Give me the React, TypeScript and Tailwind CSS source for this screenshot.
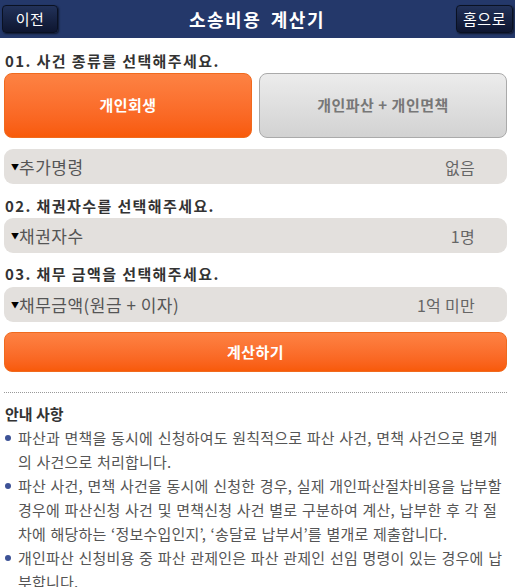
import React from 'react';

const FONT = "font-['Noto_Sans_CJK_KR','Noto_Sans',sans-serif]";

interface SelectRowProps {
  label: string;
  value: string;
}

const SelectRow: React.FC<SelectRowProps> = ({ label, value }) => (
  <div className="flex h-[35px] items-center justify-between rounded-[9px] bg-[#e3e0dd] pl-[7px] pr-[32px] text-[#555]">
    <span className="flex items-center text-[17px] tracking-[0.5px]">
      <span className="text-[8px] leading-none tracking-normal text-black">▼</span>
      {label}
    </span>
    <span className="text-[16px] tracking-[0.3px] text-[#666]">{value}</span>
  </div>
);

const notices = [
  '파산과 면책을 동시에 신청하여도 원칙적으로 파산 사건, 면책 사건으로 별개의 사건으로 처리합니다.',
  '파산 사건, 면책 사건을 동시에 신청한 경우, 실제 개인파산절차비용을 납부할 경우에 파산신청 사건 및 면책신청 사건 별로 구분하여 계산, 납부한 후 각 절차에 해당하는 ‘정보수입인지’, ‘송달료 납부서’를 별개로 제출합니다.',
  '개인파산 신청비용 중 파산 관제인은 파산 관제인 선임 명령이 있는 경우에 납부합니다.',
];

const App: React.FC = () => {
  return (
    <div className={`h-[587px] w-[515px] overflow-hidden bg-white ${FONT}`}>
      {/* Header */}
      <header className="flex h-[38px] items-center justify-between bg-[#24386a] px-[2px]">
        <button className="h-[28px] w-[56px] rounded-[4px] border border-[#0a1122] bg-gradient-to-b from-[#22325a] to-[#0e1630] text-[15px] tracking-[0.5px] text-white shadow-[1px_1px_2px_rgba(0,0,0,0.6)]">
          이전
        </button>
        <h1 className="text-[18px] font-bold tracking-[1.5px] text-white [word-spacing:4px]">소송비용 계산기</h1>
        <button className="h-[28px] w-[57px] rounded-[4px] border border-[#0a1122] bg-gradient-to-b from-[#22325a] to-[#0e1630] text-[15px] tracking-[0.5px] text-white shadow-[1px_1px_2px_rgba(0,0,0,0.6)]">
          홈으로
        </button>
      </header>

      <main className="pl-[4px] pr-[8px]">
        <p className="mt-[13px] h-[20px] pl-[1px] text-[15px] font-bold leading-[20px] tracking-[1.4px] text-[#333]">01. 사건 종류를 선택해주세요.</p>
        <div className="mt-[2px] flex gap-[7px]">
          <button className="h-[65px] flex-1 rounded-[8px] border border-[#f06a1e] bg-gradient-to-b from-[#fd8243] to-[#f85a08] text-[15px] font-bold tracking-[0.5px] text-white">
            개인회생
          </button>
          <button className="h-[65px] flex-1 rounded-[8px] border border-[#aaa] bg-gradient-to-b from-[#ececec] to-[#d2d2d2] text-[15px] font-bold tracking-[0.5px] text-[#777]">
            개인파산 + 개인면책
          </button>
        </div>

        <div className="mt-[11px]">
          <SelectRow label="추가명령" value="없음" />
        </div>

        <p className="mt-[12px] h-[20px] pl-[1px] text-[15px] font-bold leading-[20px] tracking-[1.4px] text-[#333]">02. 채권자수를 선택해주세요.</p>
        <div className="mt-[2px]">
          <SelectRow label="채권자수" value="1명" />
        </div>

        <p className="mt-[11px] h-[20px] pl-[1px] text-[15px] font-bold leading-[20px] tracking-[1.4px] text-[#333]">03. 채무 금액을 선택해주세요.</p>
        <div className="mt-[3px]">
          <SelectRow label="채무금액(원금 + 이자)" value="1억 미만" />
        </div>

        <button className="mt-[10px] h-[40px] w-full rounded-[8px] border border-[#f06a1e] bg-gradient-to-b from-[#fd8243] to-[#f85a08] text-[15px] font-bold tracking-[0.5px] text-white">
          계산하기
        </button>

        <div className="mt-[20px] border-t border-dotted border-[#999]" />

        <h2 className="mt-[11px] h-[20px] pl-[1px] text-[15px] font-bold leading-[20px] text-[#333]">안내 사항</h2>
        <ul className="mt-[2px] text-[15px] leading-[24px] tracking-[0.2px] text-[#555] [word-spacing:1px]">
          {notices.map((text, i) => (
            <li key={i} className="relative pl-[14px]">
              <span className="absolute left-[1px] top-[9px] h-[6px] w-[6px] rounded-full bg-[#3d5296]" />
              {text}
            </li>
          ))}
        </ul>
      </main>
    </div>
  );
};

export default App;
